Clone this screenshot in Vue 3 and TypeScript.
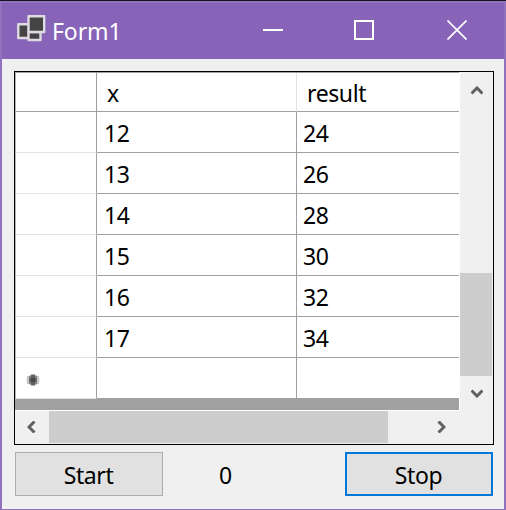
<script setup lang="ts">
import { ref } from 'vue'

interface Row {
  x: number
  result: number
}

const rows = ref<Row[]>([12, 13, 14, 15, 16, 17].map((x) => ({ x, result: x * 2 })))
const counter = ref(0)
</script>

<template>
  <div class="window">
    <header class="titlebar">
      <svg class="app-icon" width="30" height="28" viewBox="0 0 30 28">
        <g fill="#444" stroke="#dedbe2" stroke-width="2.4" stroke-linejoin="round">
          <rect x="2.3" y="9.3" width="10.7" height="13.7" />
          <rect x="12.5" y="17" width="12" height="8" />
          <rect x="12.5" y="1.3" width="15.7" height="15.7" />
        </g>
      </svg>
      <span class="title">Form1</span>
      <nav class="controls">
        <svg width="20" height="20" viewBox="0 0 20 20"><path d="M0 10H20" /></svg>
        <svg width="20" height="20" viewBox="0 0 20 20"><rect x="1" y="1" width="18" height="18" /></svg>
        <svg class="close" width="20" height="20" viewBox="0 0 20 20"><path d="M.5 .5L19.5 19.5M19.5 .5L.5 19.5" /></svg>
      </nav>
    </header>
    <main class="client">
      <section class="grid">
        <div class="view">
          <div class="row head">
            <div class="stub"></div>
            <div class="cell x">x</div>
            <div class="cell">result</div>
          </div>
          <div v-for="row in rows" :key="row.x" class="row">
            <div class="stub"></div>
            <div class="cell x">{{ row.x }}</div>
            <div class="cell">{{ row.result }}</div>
          </div>
          <div class="row blank">
            <div class="stub">
              <svg width="14" height="14" viewBox="0 0 14 14">
                <rect x="0" y="4" width="14" height="6" fill="#eee" />
                <rect x="1" y="3" width="12" height="8" fill="#c8c8c8" />
                <rect x="3" y="2" width="8" height="10" fill="#c8c8c8" />
                <rect x="5" y="1" width="4" height="12" fill="#b0b0b0" />
                <rect x="3" y="3" width="8" height="8" fill="#858585" />
                <rect x="5" y="2" width="4" height="10" fill="#606060" />
                <rect x="3" y="5" width="8" height="4" fill="#666" />
                <rect x="5" y="5" width="4" height="4" fill="#484848" />
              </svg>
            </div>
            <div class="cell x"></div>
            <div class="cell"></div>
          </div>
        </div>
        <div class="vscroll">
          <svg class="up" width="12" height="9" viewBox="0 0 12 9"><path d="M0.5 7.5L6 2L11.5 7.5" /></svg>
          <div class="vthumb"></div>
          <svg class="down" width="12" height="9" viewBox="0 0 12 9"><path d="M0.5 1.5L6 7L11.5 1.5" /></svg>
        </div>
        <div class="hscroll">
          <svg width="9" height="12" viewBox="0 0 9 12"><path d="M7.5 .5L2 6L7.5 11.5" /></svg>
          <div class="hthumb"></div>
          <svg class="right" width="9" height="12" viewBox="0 0 9 12"><path d="M1.5 .5L7 6L1.5 11.5" /></svg>
        </div>
        <div class="corner"></div>
      </section>
      <footer class="actions">
        <button class="start" type="button">Start</button>
        <span class="counter">{{ counter }}</span>
        <button class="stop" type="button">Stop</button>
      </footer>
    </main>
  </div>
</template>

<style>
body {
  margin: 0;
  overflow: hidden;
}
</style>

<style scoped>
* {
  box-sizing: border-box;
}
.window {
  width: 506px;
  height: 510px;
  border-top: 1px solid #17131c;
  background: #f0f0f0;
  box-shadow: inset 2px 0 #9172be, inset -2px 0 #9172be, inset 0 -1px #9172be;
  font-family: "Noto Sans", "Open Sans", sans-serif;
  font-size: 23px;
  letter-spacing: -0.4px;
  color: #000;
}
.titlebar {
  height: 58px;
  display: flex;
  align-items: center;
  padding: 0 37px 0 16px;
  background: #8764b8;
  border: 2px solid #9172be;
  border-bottom: 0;
  color: #fff;
}
.app-icon {
  display: block;
  margin-left: -2px;
  margin-bottom: 4px;
}
.title {
  margin-left: 6px;
  line-height: 32px;
  letter-spacing: -0.1px;
}
.controls {
  display: flex;
  gap: 71px;
  margin-left: auto;
  margin-bottom: 2px;
}
.controls svg {
  display: block;
  fill: none;
  stroke: #fff;
  stroke-width: 2;
}
.controls .close {
  stroke-width: 1.7;
  margin-left: 2px;
}
.client {
  padding: 12px 12px 0 14px;
}
.grid {
  width: 480px;
  height: 374px;
  border: 1px solid #000;
  display: grid;
  grid-template-columns: 445px 33px;
  grid-template-rows: 339px 33px;
}
.view {
  width: 444px;
  height: 338px;
  overflow: hidden;
  background: #a0a0a0;
  border-top: 1px solid #a0a0a0;
  box-shadow: 1px 1px #fff;
}
.row {
  display: grid;
  grid-template-columns: 82px 200px 1fr;
  grid-template-rows: 100%;
  height: 41px;
  line-height: 37px;
  background: #fff;
}
.row > div {
  border-bottom: 1px solid #a0a0a0;
}
.stub {
  border-left: 1px solid #b4b4b4;
  border-right: 1px solid #a0a0a0;
}
.row:not(.head) > .stub {
  border-bottom-color: #e2e2e2;
}
.cell {
  padding: 3px 0 0 6px;
}
.x {
  border-right: 1px solid #a0a0a0;
}
.row:not(.head) > .x {
  padding-left: 7px;
}
.head {
  height: 39px;
  line-height: 37px;
}
.head .cell {
  padding: 2px 0 0 10px;
}
.head .x {
  border-right-color: #e2e2e2;
}
.blank .stub svg {
  display: block;
  margin: 15px 0 0 10px;
}
.vscroll {
  display: flex;
  flex-direction: column;
  align-items: center;
  background: #f0f0f0;
}
.vscroll svg,
.hscroll svg {
  display: block;
  flex: none;
  fill: none;
  stroke: #606060;
  stroke-width: 3;
}
.up {
  margin-top: 14px;
}
.vthumb {
  width: 32px;
  height: 103px;
  margin: 178px 1px 0 0;
  background: #cdcdcd;
}
.down {
  margin-top: 13px;
}
.hscroll {
  display: flex;
  align-items: center;
  padding: 0 9px 1px 12px;
  background: #f0f0f0;
}
.hthumb {
  width: 339px;
  height: 32px;
  margin-left: 13px;
  background: #cdcdcd;
}
.right {
  margin-left: 49px;
}
.corner {
  background: #f0f0f0;
}
.actions {
  display: grid;
  grid-template-columns: 148px 1fr 148px;
  grid-template-rows: 100%;
  height: 44px;
  margin: 7px 1px 0;
}
button {
  margin: 0;
  padding: 2px 1px 0 0;
  border: 1px solid #adadad;
  background: #e1e1e1;
  color: inherit;
  font: inherit;
  letter-spacing: inherit;
}
.stop {
  border: 2px solid #0078d7;
}
.counter {
  padding: 1px 0 0 56px;
  line-height: 44px;
}
</style>
